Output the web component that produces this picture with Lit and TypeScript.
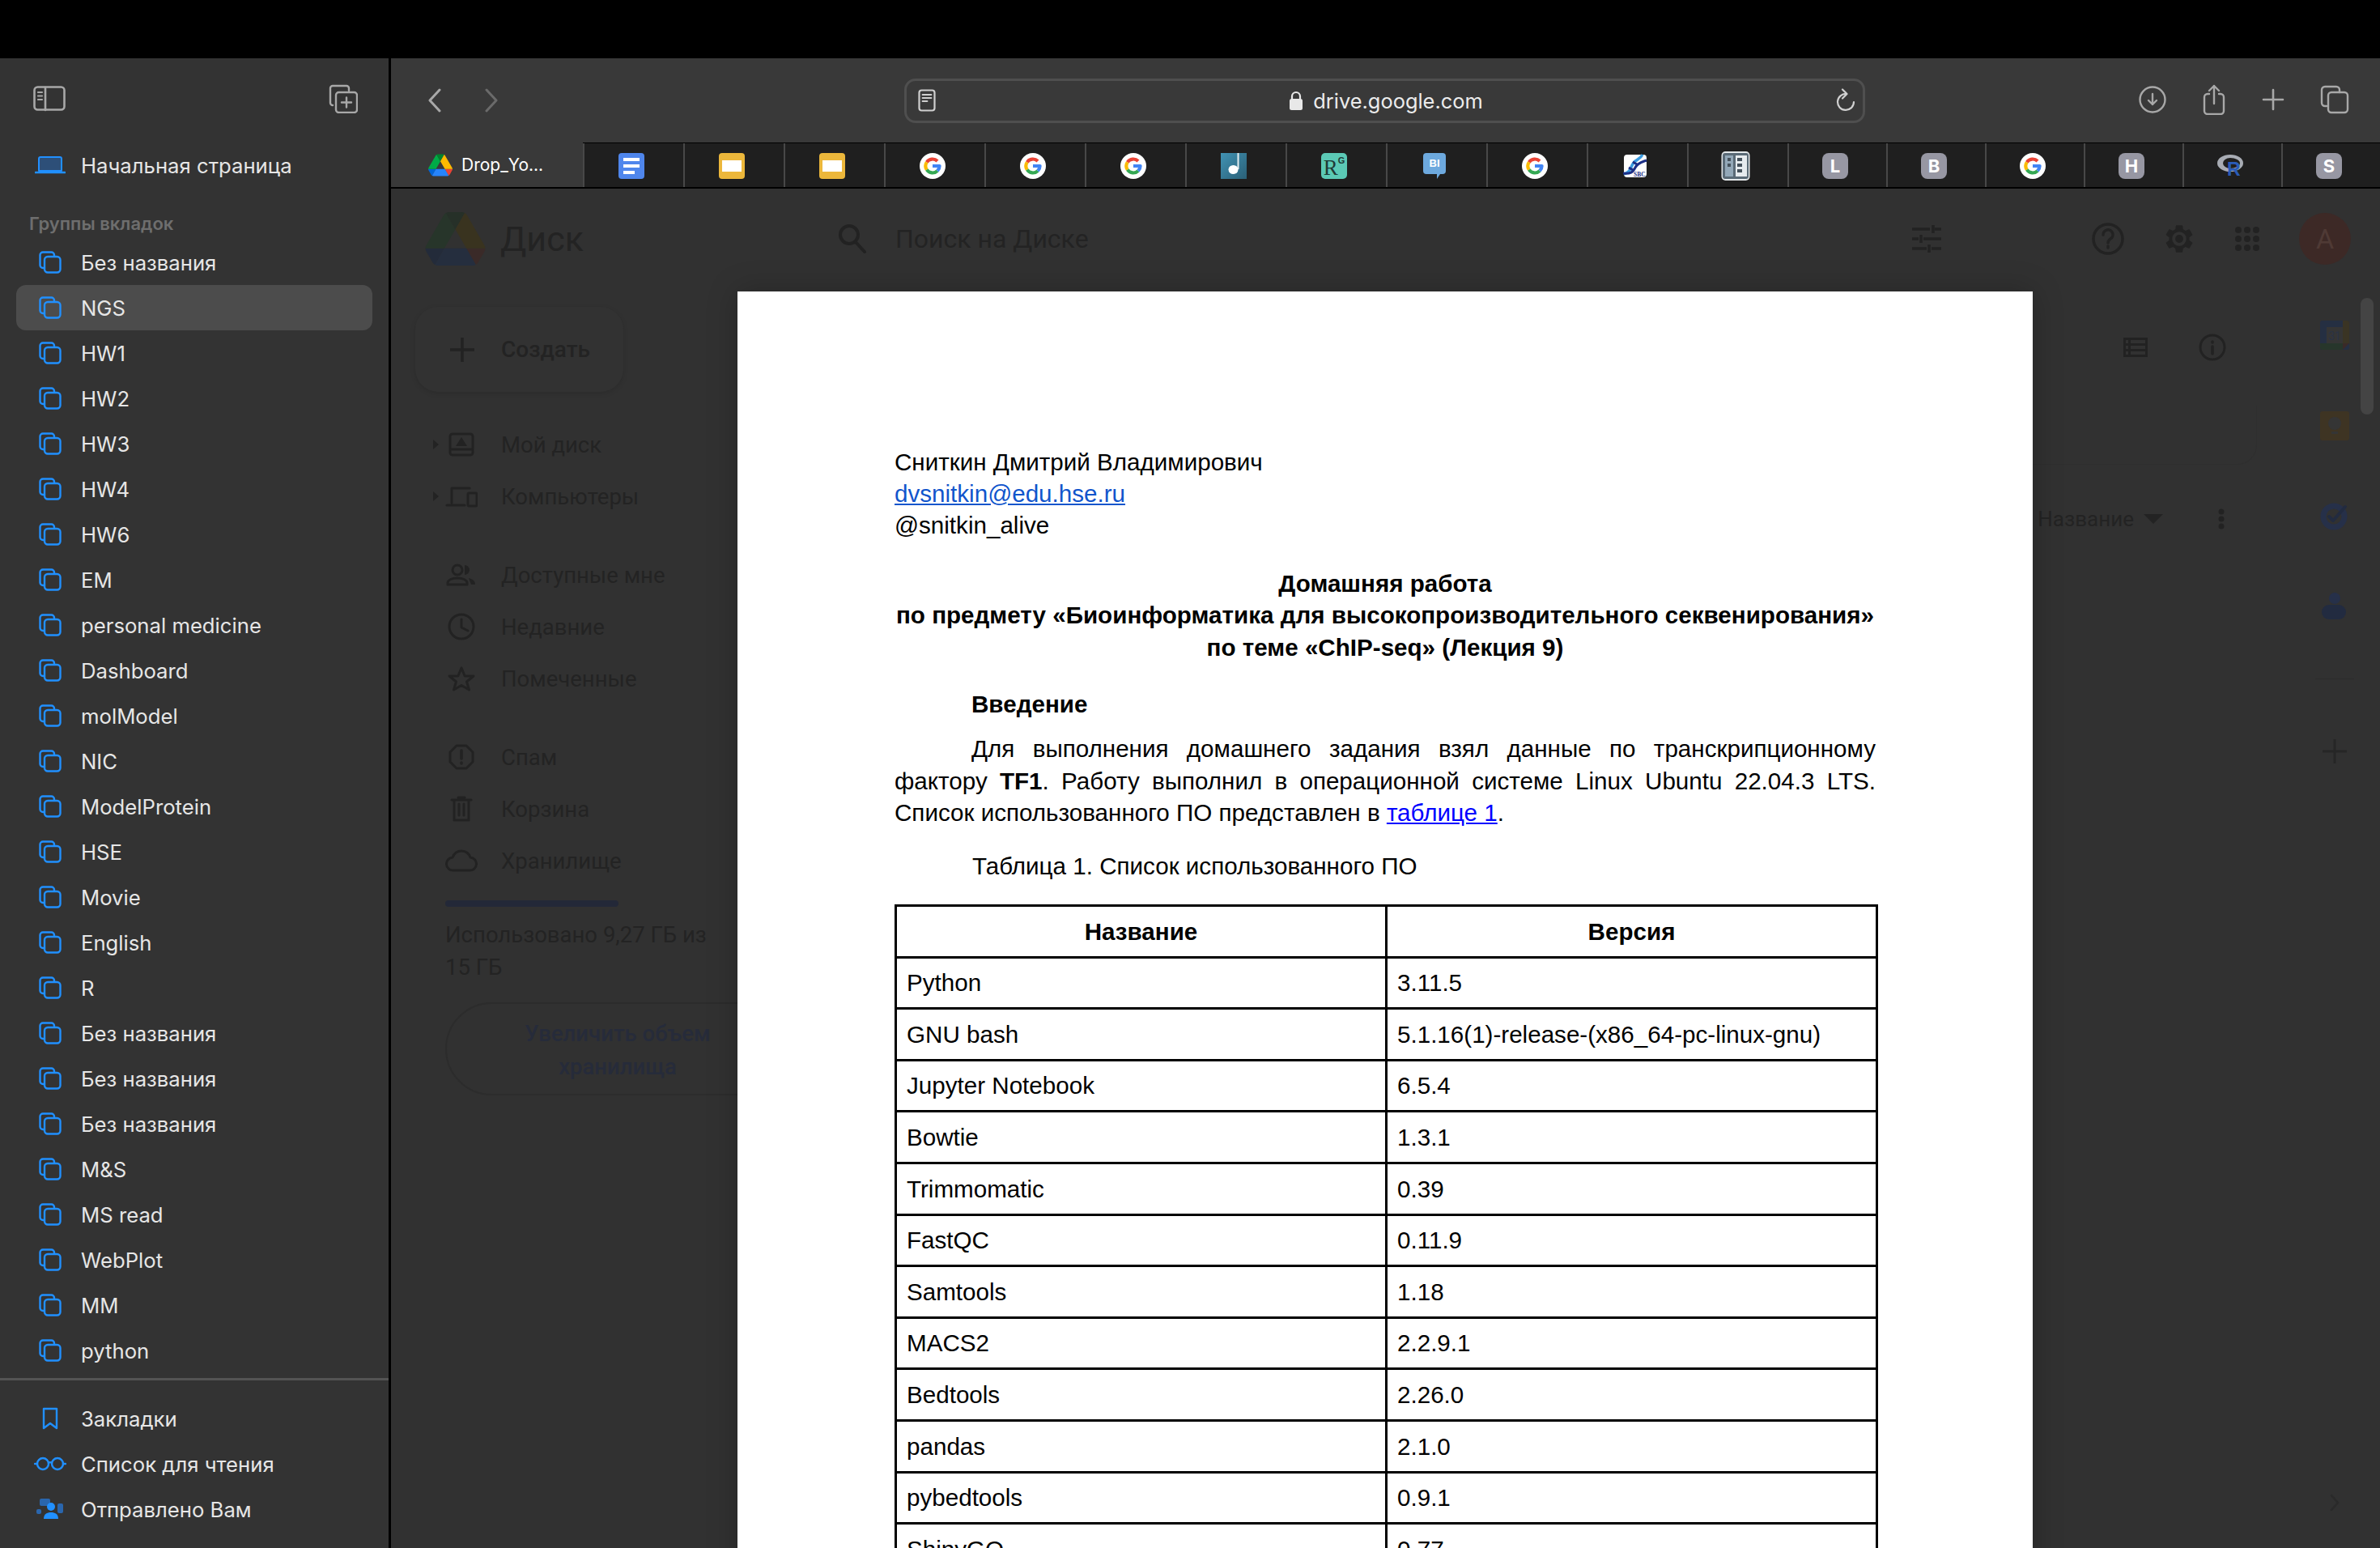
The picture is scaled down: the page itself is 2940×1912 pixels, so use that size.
import { LitElement, css, html, svg } from "lit";
import { customElement } from "lit/decorators.js";

const GROUPS = [
  "Без названия", "NGS", "HW1", "HW2", "HW3", "HW4", "HW6", "EM", "personal medicine",
  "Dashboard", "molModel", "NIC", "ModelProtein", "HSE", "Movie", "English", "R",
  "Без названия", "Без названия", "Без названия", "M&S", "MS read", "WebPlot", "MM", "python",
];

const ROWS = [
  ["Python", "3.11.5"], ["GNU bash", "5.1.16(1)-release-(x86_64-pc-linux-gnu)"],
  ["Jupyter Notebook", "6.5.4"], ["Bowtie", "1.3.1"], ["Trimmomatic", "0.39"],
  ["FastQC", "0.11.9"], ["Samtools", "1.18"], ["MACS2", "2.2.9.1"], ["Bedtools", "2.26.0"],
  ["pandas", "2.1.0"], ["pybedtools", "0.9.1"], ["ShinyGO", "0.77"],
];

const icon = (w: number, h: number, body: unknown, vb = `0 0 ${w} ${h}`) =>
  html`<svg width=${w} height=${h} viewBox=${vb} fill="none" stroke-linecap="round" stroke-linejoin="round">${body}</svg>`;

const groupIcon = () => icon(28, 28, svg`<g stroke="#2190ff" stroke-width="2.4">
  <path d="M7 21H5a3.5 3.5 0 0 1-3.5-3.5V5A3.5 3.5 0 0 1 5 1.500h10.500A3.500 3.500 0 0 1 19 5v1.500"/>
  <rect x="7" y="7" width="19.500" height="19.500" rx="4"/></g>`);

// same mark in two palettes: the live tab favicon and the dimmed page header
const driveMark = (p: string[]) => svg`
  <path d="m6.6 66.85 3.85 6.65c.8 1.4 1.95 2.5 3.3 3.3l13.75-23.8h-27.5c0 1.55.4 3.1 1.2 4.5z" fill=${p[0]}/>
  <path d="m43.65 25-13.75-23.8c-1.35.8-2.5 1.9-3.3 3.3l-25.4 44a9.06 9.06 0 0 0 -1.2 4.5h27.5z" fill=${p[1]}/>
  <path d="m73.55 76.8c1.35-.8 2.5-1.9 3.3-3.3l1.6-2.75 7.65-13.25c.8-1.4 1.2-2.95 1.2-4.5h-27.502l5.852 11.5z" fill=${p[2]}/>
  <path d="m43.65 25 13.75-23.8c-1.35-.8-2.9-1.2-4.5-1.2h-18.5c-1.6 0-3.15.45-4.5 1.2z" fill=${p[3]}/>
  <path d="m59.8 53h-32.3l-13.75 23.8c1.35.8 2.9 1.2 4.5 1.2h50.8c1.6 0 3.15-.45 4.5-1.2z" fill=${p[4]}/>
  <path d="m73.4 26.5-12.7-22c-.8-1.4-1.95-2.5-3.3-3.3l-13.75 23.8 16.15 28h27.45c0-1.55-.4-3.1-1.2-4.5z" fill=${p[5]}/>`;
const DRIVE_LIVE = ["#0066da", "#00ac47", "#ea4335", "#00832d", "#2684fc", "#ffba00"];
const DRIVE_DIM = ["#232b3a", "#27352a", "#3a2a28", "#263028", "#252e3e", "#39331f"];

const gIcon = () => icon(32, 32, svg`<circle cx="16" cy="16" r="16" fill="#fff"/>
  <g stroke-width="4.200" stroke-linecap="butt">
  <path d="M8.800 11.300A8.600 8.600 0 0 1 22 10" stroke="#ea4335"/>
  <path d="M8.800 11.300a8.600 8.600 0 0 0 0 9.400" stroke="#fbbc05"/>
  <path d="M8.800 20.700A8.600 8.600 0 0 0 22 22" stroke="#34a853"/>
  <path d="M22 22a8.600 8.600 0 0 0 2.600-6H16" stroke="#4285f4"/></g>`);

const badge = (letter: string) => html`<span class="badge">${letter}</span>`;

const FAVICONS = [
  icon(32, 32, svg`<rect width="32" height="32" rx="4" fill="#4f86ec"/><path d="M6 6h20v4H6zM6 14h20v4H6zM6 22h14v4H6z" fill="#fff"/>`),
  icon(32, 32, svg`<rect width="32" height="32" rx="4" fill="#ecb73b"/><rect x="4" y="9" width="24" height="14" fill="#fff"/>`),
  icon(32, 32, svg`<rect width="32" height="32" rx="4" fill="#ecb73b"/><rect x="4" y="9" width="24" height="14" fill="#fff"/>`),
  gIcon(), gIcon(), gIcon(),
  icon(32, 32, svg`<defs><linearGradient id="note" x1="0" y1="0" x2="1" y2="1"><stop offset="0" stop-color="#4193b4"/><stop offset="1" stop-color="#2a5f76"/></linearGradient></defs>
    <rect width="32" height="32" fill="url(#note)"/><path d="M21.500 0v20" stroke="#e4eef1" stroke-width="2" stroke-linecap="butt"/><ellipse cx="15.500" cy="20.500" rx="6" ry="5.500" fill="#fff"/>`),
  html`<span class="rg">R<sup>G</sup></span>`,
  html`<span class="bi">BI</span>`,
  gIcon(),
  icon(30, 30, svg`<rect x="1" y="1" width="28" height="28" rx="4" fill="#fff"/>
    <path d="M1 25c10-2 8-12 14-16 4-3 7-4 9-8" stroke="#3a9be0" stroke-width="3.500" stroke-linecap="butt"/>
    <path d="M0 24c9 1 12-1 15-7s9-7 14-9M7 17l7 4M12 10l7 4" stroke="#1c2f86" stroke-width="3" stroke-linecap="butt"/>
    <text x="13" y="28" font-size="7.500" font-weight="700" fill="#1c2f86" font-family="Liberation Serif, serif">SBC</text>`),
  icon(36, 36, svg`<rect x="0.500" y="0" width="35" height="36" rx="5" fill="#e4e8ea"/><rect x="2" y="2" width="32" height="32" rx="3" fill="#5a6a76"/><rect x="5" y="5" width="10" height="26" fill="#93a8b8"/><rect x="18" y="5" width="14" height="26" fill="#e6ebee"/><path d="M8 8h4v4H8zM8 15h4v4H8zM20 8h6v4h-6zM20 15h6v4h-6zM20 22h6v4h-6z" fill="#46525c"/>`),
  badge("L"), badge("B"), gIcon(), badge("H"),
  html`<span class="rlogo"><i></i><b>R</b></span>`,
  badge("S"),
];

const dim = "#222";
const GEAR =
  "M19.14 12.94c.04-.3.06-.61.06-.94 0-.32-.02-.64-.07-.94l2.03-1.58c.18-.14.23-.41.12-.61l-1.92-3.32c-.12-.22-.37-.29-.59-.22l-2.39.96c-.5-.38-1.03-.7-1.62-.94l-.36-2.54c-.04-.24-.24-.41-.48-.41h-3.84c-.24 0-.43.17-.47.41l-.36 2.54c-.59.24-1.13.57-1.62.94l-2.39-.96c-.22-.08-.47 0-.59.22L2.74 8.87c-.12.21-.08.47.12.61l2.03 1.58c-.05.3-.09.63-.09.94s.02.64.07.94l-2.03 1.58c-.18.14-.23.41-.12.61l1.92 3.32c.12.22.37.29.59.22l2.39-.96c.5.38 1.03.7 1.62.94l.36 2.54c.05.24.24.41.48.41h3.84c.24 0 .44-.17.47-.41l.36-2.54c.59-.24 1.13-.56 1.62-.94l2.39.96c.22.08.47 0 .59-.22l1.92-3.32c.12-.22.07-.47-.12-.61l-2.01-1.58z";

const NAV_TOP = [
  ["Мой диск", icon(32, 32, svg`<rect x="2" y="3" width="28" height="26" rx="3" stroke=${dim} stroke-width="3"/><path d="M3 22h26" stroke=${dim} stroke-width="3"/><path d="M16 7l7 11H9z" fill=${dim}/>`), true],
  ["Компьютеры", icon(40, 28, svg`<path d="M8 22V4h22M2 25h22" stroke=${dim} stroke-width="3"/><rect x="28" y="10" width="11" height="16" rx="1.500" stroke=${dim} stroke-width="3"/>`), true],
];
const NAV_MID = [
  ["Доступные мне", icon(38, 28, svg`<circle cx="14" cy="8" r="6" stroke=${dim} stroke-width="3"/><path d="M2 26v-2c0-4 6-6 12-6s12 2 12 6v2z" stroke=${dim} stroke-width="3"/><path d="M23 2a6 6 0 0 1 0 12M28 18c4 1 8 3 8 8h-5z" fill=${dim}/>`)],
  ["Недавние", icon(34, 34, svg`<circle cx="17" cy="17" r="15" stroke=${dim} stroke-width="3"/><path d="M17 8v10l8 4" stroke=${dim} stroke-width="3"/>`)],
  ["Помеченные", icon(34, 32, svg`<path d="M17 3l4.200 10H32l-8.500 7 3 10L17 24.500 7.500 30l3-10L2 13h10.800z" stroke=${dim} stroke-width="3"/>`)],
];
const NAV_LOW = [
  ["Спам", icon(32, 32, svg`<path d="M10 2h12l8 8v12l-8 8H10l-8-8V10z" stroke=${dim} stroke-width="3"/><path d="M16 8v10M16 23v1" stroke=${dim} stroke-width="3.500"/>`)],
  ["Корзина", icon(28, 32, svg`<path d="M2 5h24M10 2h8M5 5v25h18V5M11 10v14M17 10v14" stroke=${dim} stroke-width="3"/>`)],
  ["Хранилище", icon(40, 28, svg`<path d="M10 26a8 8 0 0 1-1-16C11 5 15 2 20 2c6 0 10 4 11 8a8 8 0 0 1-1 16z" stroke=${dim} stroke-width="3"/>`)],
];

@customElement("app-root")
export class AppRoot extends LitElement {
  static styles = css`
    :host {
      display: block;
      width: 2940px;
      height: 1912px;
      overflow: hidden;
      background: #000;
      font-family: Inter, "Noto Sans", sans-serif;
    }
    svg { display: block; flex: none; }
    .shell { display: flex; height: 1840px; margin-top: 72px; }

    /* sidebar */
    .side {
      width: 480px;
      flex: none;
      background: #333;
      border-right: 3px solid #000;
      display: flex;
      flex-direction: column;
      color: #e6e6e6;
      font-size: 25.700px;
    }
    .side-top {
      height: 104px;
      display: flex;
      justify-content: space-between;
      align-items: center;
      padding: 0 38px 4px 41px;
      box-sizing: border-box;
    }
    .row {
      height: 56px;
      margin: 0 20px;
      padding-left: 16px;
      display: flex;
      align-items: center;
      gap: 12px;
      border-radius: 12px;
      white-space: nowrap;
    }
    .row.on { background: #4c4c4c; }
    .slot { width: 52px; display: flex; justify-content: center; }
    .label {
      font-size: 22px;
      font-weight: 600;
      color: #6e6e6e;
      margin: 22px 0 0 36px;
      height: 42px;
      line-height: 44px;
    }
    .divider { height: 3px; background: #545454; margin: 6px 0 19px; }

    /* window */
    .win { flex: 1; min-width: 0; display: flex; flex-direction: column; }
    .bar {
      height: 104px;
      flex: none;
      background: #393939;
      display: flex;
      align-items: center;
      position: relative;
    }
    .nav-btns { display: flex; gap: 54px; margin-left: 46px; width: 588px; }
    .addr {
      width: 1187px;
      height: 55px;
      box-sizing: border-box;
      border: 3px solid #4f4f4f;
      border-radius: 14px;
      display: flex;
      align-items: center;
      padding: 0 9px 0 14px;
      color: #ececec;
      font-size: 25.400px;
    }
    .host { flex: 1; display: flex; justify-content: center; align-items: center; gap: 12px; }
    .tools { display: flex; align-items: center; gap: 44px; margin: -2px 0 0 338px; }

    .tabs {
      height: 57px;
      flex: none;
      display: flex;
      box-sizing: border-box;
      border-top: 1px solid #000;
      border-bottom: 2px solid #000;
      background: #1f1f1f;
    }
    .tab-on {
      width: 237px;
      margin-top: -1px;
      background: #393939;
      display: flex;
      align-items: center;
      gap: 11px;
      padding-left: 46px;
      box-sizing: border-box;
      color: #fff;
      font-size: 21px;
    }
    .tab {
      width: 124px;
      box-sizing: border-box;
      border-left: 2px solid #484848;
      padding: 2px 6px 0 0;
      display: flex;
      align-items: center;
      justify-content: center;
    }
    .tab.small { width: 122px; }
    .badge {
      width: 32px;
      height: 32px;
      border-radius: 8px;
      background: #9797a3;
      color: #fff;
      font: 700 22px/32px Inter, sans-serif;
      text-align: center;
    }
    .rg {
      width: 32px;
      height: 32px;
      border-radius: 5px;
      background: #5bc9b5;
      color: #1f3a36;
      font: 27px/36px "Liberation Serif", serif;
      text-align: center;
      white-space: nowrap;
    }
    .rg sup {
      font: 700 11px/0 "Liberation Sans", sans-serif;
      vertical-align: 14px;
    }
    .bi {
      width: 28px;
      height: 26px;
      border-radius: 4px;
      margin-top: -6px;
      background: #6da9de;
      color: #fff;
      font: 700 13px/26px "Liberation Sans", sans-serif;
      text-align: center;
      position: relative;
    }
    .bi::after {
      content: "";
      position: absolute;
      left: 17px;
      top: 26px;
      border-left: 4px solid #6da9de;
      border-bottom: 6px solid transparent;
    }
    .rlogo { width: 32px; height: 28px; position: relative; }
    .rlogo i {
      position: absolute;
      left: 0;
      top: 0;
      width: 32px;
      height: 21px;
      box-sizing: border-box;
      border: 4px solid #a8acb4;
      border-left-width: 7px;
      border-radius: 50%;
    }
    .rlogo b {
      position: absolute;
      left: 12px;
      top: 7px;
      color: #2a5cb8;
      font: 700 23px/23px "Liberation Sans", sans-serif;
    }

    /* dimmed drive page behind the preview */
    .page {
      flex: 1;
      min-height: 0;
      position: relative;
      overflow: hidden;
      background: #313131;
      color: #232323;
      font-family: Roboto, sans-serif;
    }
    .d-head { height: 124px; display: flex; align-items: center; }
    .d-logo { margin-left: 42px; }
    .d-title { font-size: 43px; margin-left: 18px; width: 417px; }
    .d-search { width: 1327px; display: flex; align-items: center; gap: 35px; font-size: 32px; }
    .d-right { display: flex; align-items: center; }
    .avatar {
      width: 64px;
      height: 64px;
      border-radius: 50%;
      background: #3d2926;
      color: #4f3a35;
      font-size: 34px;
      line-height: 64px;
      text-align: center;
    }
    .d-body { display: flex; height: 1555px; }
    .d-nav { width: 428px; flex: none; padding-top: 22px; font-size: 27.500px; box-sizing: border-box; }
    .create {
      width: 257px;
      height: 105px;
      margin-left: 30px;
      border-radius: 28px;
      background: #323232;
      box-shadow: 0 2px 6px rgba(0, 0, 0, 0.12);
      display: flex;
      align-items: center;
      gap: 32px;
      padding-left: 42px;
      box-sizing: border-box;
      font-size: 28px;
      font-weight: 500;
    }
    .group { margin-top: 33px; }
    .ditem { height: 64px; display: flex; align-items: center; position: relative; white-space: nowrap; }
    .dslot { width: 136px; display: flex; justify-content: flex-end; }
    .dslot > span { width: 98px; display: flex; justify-content: center; }
    .ditem b { font-weight: 400; }
    .caret {
      position: absolute;
      left: 52px;
      top: 26px;
      border-left: 7px solid #232323;
      border-top: 6px solid transparent;
      border-bottom: 6px solid transparent;
    }
    .usage { margin: 17px 0 0 67px; width: 345px; }
    .track { width: 214px; height: 8px; border-radius: 4px; background: #232838; }
    .used { line-height: 40px; margin-top: 15px; }
    .more {
      margin-top: 23px;
      width: 426px;
      height: 115px;
      box-sizing: border-box;
      border: 2px solid #2c2c2c;
      border-radius: 58px;
      color: #262b3a;
      font-weight: 500;
      line-height: 41px;
      text-align: center;
      padding-top: 16px;
    }
    .d-main { flex: 1; min-width: 0; font-size: 26px; }
    .d-tools { display: flex; justify-content: flex-end; align-items: center; gap: 63px; padding: 55px 78px 0 0; }
    .d-card {
      height: 72px;
      margin: 55px 40px 0 0;
      border: 1px solid #2f2f2f;
      border-top: 0;
      border-radius: 0 0 24px 0;
    }
    .d-sort { display: flex; justify-content: flex-end; align-items: center; margin-top: 52px; padding-right: 80px; gap: 12px; }
    .d-sort .tri { border: 12px solid transparent; border-top: 12px solid #232323; border-bottom: 0; margin-right: 56px; }
    .d-side {
      width: 112px;
      flex: none;
      display: flex;
      flex-direction: column;
      align-items: center;
      padding-top: 1px;
      box-sizing: border-box;
      position: relative;
    }
    .d-side > div { height: 112px; width: 112px; display: flex; align-items: center; justify-content: center; }
    .d-side hr { width: 48px; height: 1px; border: 0; background: #2c2c2c; margin: 32px 0 33px; }
    .scroll {
      position: absolute;
      left: 88px;
      top: 11px;
      width: 16px;
      height: 144px;
      border-radius: 8px;
      background: #444;
    }
    .d-side .collapse {
      position: absolute;
      left: 0;
      top: 1477px;
      height: 44px;
    }

    /* document preview */
    .doc {
      position: absolute;
      left: 428px;
      top: 127px;
      width: 1600px;
      height: 1700px;
      background: #fff;
      box-shadow: 0 0 36px rgba(0, 0, 0, 0.22);
      box-sizing: border-box;
      padding: 190.500px 194px 0;
      color: #000;
      font: 29.600px/39.4px "Liberation Sans", Arial, sans-serif;
    }
    .doc p { margin: 0; }
    .doc a { text-decoration: underline; }
    .mail { color: #1155cc; }
    .ref { color: #0000ff; }
    .center { text-align: center; font-weight: 700; margin-top: 32px !important; white-space: nowrap; }
    .h { font-weight: 700; margin: 31px 0 0 95px !important; }
    .para { text-align: justify; text-indent: 95px; margin-top: 16px !important; }
    .cap { margin: 26px 0 0 96px !important; }
    .tbl {
      margin-top: 28px;
      width: 1215px;
      display: grid;
      grid-template-columns: 606px 606px;
      grid-auto-rows: 63.600px;
      border: 3px solid #000;
      border-width: 3px 0 0 3px;
      box-sizing: border-box;
    }
    .tbl > div {
      border: 3px solid #000;
      border-width: 0 3px 3px 0;
      display: flex;
      align-items: center;
      padding-left: 12px;
      box-sizing: border-box;
      white-space: nowrap;
    }
    .tbl > .th { font-weight: 700; justify-content: center; padding: 0; }
  `;

  private ditem(item: unknown[]) {
    return html`<div class="ditem">
      ${item[2] ? html`<i class="caret"></i>` : ""}
      <div class="dslot"><span>${item[1]}</span></div>
      <b>${item[0]}</b>
    </div>`;
  }

  private sidebar() {
    const blue = "#2190ff";
    return html`<aside class="side">
      <div class="side-top">
        ${icon(40, 32, svg`<rect x="1.500" y="1.500" width="37" height="28" rx="4" stroke="#a8a8a8" stroke-width="2.600"/>
          <path d="M15 2v28" stroke="#a8a8a8" stroke-width="2.600"/><path d="M6 8h5M6 12.500h5M6 17h5" stroke="#a8a8a8" stroke-width="2.200"/>`)}
        ${icon(36, 36, svg`<g stroke="#a8a8a8" stroke-width="2.400"><path d="M5 26a3 3 0 0 1-3-3V5a3 3 0 0 1 3-3h17a3 3 0 0 1 3 3v3"/>
          <rect x="9" y="10" width="26" height="25" rx="3.500"/><path d="M22 16.500v12M16 22.500h12"/></g>`)}
      </div>
      <div class="row">
        <span class="slot">${icon(38, 24, svg`<path d="M5 19V4a2 2 0 0 1 2-2h24a2 2 0 0 1 2 2v15z" fill="#2d4f78" stroke=${blue} stroke-width="2"/>
          <path d="M1 21h36" stroke=${blue} stroke-width="2.600"/>`)}</span>
        Начальная страница
      </div>
      <div class="label">Группы вкладок</div>
      ${GROUPS.map((g, i) => html`<div class="row ${i === 1 ? "on" : ""}"><span class="slot">${groupIcon()}</span>${g}</div>`)}
      <div class="divider"></div>
      <div class="row"><span class="slot">${icon(20, 28, svg`<path d="M2 2h16v24l-8-6-8 6z" stroke=${blue} stroke-width="2.400"/>`)}</span>Закладки</div>
      <div class="row"><span class="slot">${icon(40, 18, svg`<g stroke=${blue} stroke-width="2.400"><circle cx="11" cy="9" r="7"/><circle cx="29" cy="9" r="7"/><path d="M18 8c1-1 3-1 4 0M1 9h3M36 9h3"/></g>`)}</span>Список для чтения</div>
      <div class="row"><span class="slot">${icon(34, 26, svg`<rect x="4" y="0" width="13" height="9" rx="2" fill="#2a66ad"/><rect x="26" y="6" width="7" height="12" rx="2" fill="#2a66ad"/><rect x="0" y="13" width="6" height="6" rx="2" fill="#2a66ad"/>
          <circle cx="18" cy="10" r="5" fill=${blue}/><path d="M9 25c0-6 4-8 9-8s9 2 9 8z" fill=${blue}/>`)}</span>Отправлено Вам</div>
    </aside>`;
  }

  private toolbar() {
    const c = "#a8a8a8";
    return html`<div class="bar">
        <div class="nav-btns">
          ${icon(16, 30, svg`<path d="M14 2L2 15l12 13" stroke=${c} stroke-width="3"/>`)}
          ${icon(16, 30, svg`<path d="M2 2l12 13L2 28" stroke="#6a6a6a" stroke-width="3"/>`)}
        </div>
        <div class="addr">
          ${icon(22, 28, svg`<rect x="1.500" y="1.500" width="19" height="25" rx="3" stroke="#cfcfcf" stroke-width="2.200"/><path d="M5.500 7h11M5.500 11h11M5.500 15h6" stroke="#cfcfcf" stroke-width="1.800"/>`)}
          <div class="host">
            ${icon(18, 25, svg`<path d="M4 11V7a5 5 0 0 1 10 0v4" stroke="#e8e8e8" stroke-width="2.200"/><rect x="1" y="10" width="16" height="14" rx="2.500" fill="#e8e8e8"/>`)}
            drive.google.com
          </div>
          ${icon(24, 30, svg`<path d="M13 7A10 10 0 1 0 22 17M8 1.500l5.500 5.500L8 12.500" stroke="#d0d0d0" stroke-width="2.200"/>`)}
        </div>
        <div class="tools">
          ${icon(34, 34, svg`<circle cx="17" cy="17" r="15.500" stroke=${c} stroke-width="2.400"/><path d="M17 10v13M12 18l5 5 5-5" stroke=${c} stroke-width="2.400"/>`)}
          ${icon(30, 38, svg`<path d="M9 12H7a4 4 0 0 0-4 4v17a4 4 0 0 0 4 4h16a4 4 0 0 0 4-4V16a4 4 0 0 0-4-4h-2M15 24V2M9 8l6-6 6 6" stroke=${c} stroke-width="2.400"/>`)}
          ${icon(28, 28, svg`<path d="M14 2v24M2 14h24" stroke=${c} stroke-width="2.600"/>`)}
          ${icon(36, 36, svg`<path d="M8 26H6a4 4 0 0 1-4-4V6a4 4 0 0 1 4-4h14a4 4 0 0 1 4 4v3" stroke=${c} stroke-width="2.400"/><rect x="10" y="9" width="24" height="25" rx="4" stroke=${c} stroke-width="2.400"/>`)}
        </div>
      </div>
      <div class="tabs">
        <div class="tab-on">
          ${icon(30, 28, driveMark(DRIVE_LIVE), "0 0 87.3 78")}Drop_Yo...
        </div>
        ${FAVICONS.map((f, i) => html`<div class="tab ${i >= 12 ? "small" : ""}">${f}</div>`)}
      </div>`;
  }

  private drive() {
    return html`
      <div class="d-head">
        <div class="d-logo">${icon(75, 66, driveMark(DRIVE_DIM), "0 0 87.3 78")}</div>
        <div class="d-title">Диск</div>
        <div class="d-search">
          ${icon(36, 38, svg`<circle cx="14" cy="14" r="11" stroke=${dim} stroke-width="4"/><path d="M22 23l11 12" stroke=${dim} stroke-width="4"/>`)}
          Поиск на Диске
        </div>
        <div class="d-right">
          ${icon(36, 34, svg`<path d="M0 5h22M28 5h8M26 0v10M0 17h8M14 17h22M11 12v10M0 29h18M24 29h12M21 24v10" stroke=${dim} stroke-width="3.500" stroke-linecap="butt"/>`)}
          <div style="width:186px"></div>
          ${icon(40, 40, svg`<circle cx="20" cy="20" r="18" stroke=${dim} stroke-width="3.500"/><path d="M14 15a6 6 0 1 1 9 5c-2 1.500-3 2-3 5M20 29v2" stroke=${dim} stroke-width="3.500"/>`)}
          <div style="width:47px"></div>
          ${icon(42, 42, svg`<path d=${GEAR} fill=${dim}/><circle cx="12" cy="12" r="5" fill="#313131"/><circle cx="12" cy="12" r="2.800" fill=${dim}/>`, "0 0 24 24")}
          <div style="width:47px"></div>
          ${icon(32, 32, svg`<g fill=${dim}><circle cx="5" cy="5" r="4"/><circle cx="16" cy="5" r="4"/><circle cx="27" cy="5" r="4"/><circle cx="5" cy="16" r="4"/><circle cx="16" cy="16" r="4"/><circle cx="27" cy="16" r="4"/><circle cx="5" cy="27" r="4"/><circle cx="16" cy="27" r="4"/><circle cx="27" cy="27" r="4"/></g>`)}
          <div style="width:48px"></div>
          <div class="avatar">A</div>
        </div>
      </div>
      <div class="d-body">
        <div class="d-nav">
          <div class="create">
            ${icon(32, 32, svg`<path d="M16 1v30M1 16h30" stroke=${dim} stroke-width="3.500" stroke-linecap="butt"/>`)}
            Создать
          </div>
          <div class="group">${NAV_TOP.map((n) => this.ditem(n))}</div>
          <div class="group">${NAV_MID.map((n) => this.ditem(n))}</div>
          <div class="group">${NAV_LOW.map((n) => this.ditem(n))}</div>
          <div class="usage">
            <div class="track"></div>
            <div class="used">Использовано 9,27 ГБ из 15 ГБ</div>
            <div class="more">Увеличить объем<br />хранилища</div>
          </div>
        </div>
        <div class="d-main">
          <div class="d-tools">
            ${icon(30, 24, svg`<path fill-rule="evenodd" d="M0 0h30v24H0zM3 3v4h3V3zM9 3v4h18V3zM3 10v4h3v-4zM9 10v4h18v-4zM3 17v4h3v-4zM9 17v4h18v-4z" fill=${dim}/>`)}
            ${icon(34, 34, svg`<circle cx="17" cy="17" r="15" stroke=${dim} stroke-width="3"/><path d="M17 16v9M17 10v1" stroke=${dim} stroke-width="3.500"/>`)}
          </div>
          <div class="d-card"></div>
          <div class="d-sort">
            Название <i class="tri"></i>
            ${icon(8, 26, svg`<g fill=${dim}><circle cx="4" cy="4" r="3.500"/><circle cx="4" cy="13" r="3.500"/><circle cx="4" cy="22" r="3.500"/></g>`)}
          </div>
        </div>
        <div class="d-side">
          <div>${icon(36, 36, svg`<rect width="36" height="36" rx="3" fill="#252f42"/><path d="M28 0h5a3 3 0 0 1 3 3v25h-8z" fill="#3a3424"/><path d="M0 28h28v8H3a3 3 0 0 1-3-3z" fill="#27362b"/><path d="M28 28h8l-8 8z" fill="#3a2a28"/><rect x="8" y="8" width="20" height="20" fill="#353535"/><text x="18" y="24" font-size="14" text-anchor="middle" fill="#2a3345" font-family="Roboto, sans-serif">31</text>`)}</div>
          <div>${icon(36, 36, svg`<rect width="36" height="36" rx="3" fill="#3e3423"/><circle cx="18" cy="15" r="8" fill="#353535"/><rect x="14" y="25" width="8" height="3" fill="#353535"/>`)}</div>
          <div>${icon(36, 36, svg`<circle cx="17" cy="18" r="13" stroke="#263049" stroke-width="7"/><path d="M11 18l5 5 15-17" stroke="#222b40" stroke-width="4"/>`)}</div>
          <div>${icon(36, 36, svg`<circle cx="18" cy="7" r="7" fill="#263049"/><rect x="2" y="15" width="30" height="18" rx="9" fill="#222b40"/>`)}</div>
          <hr />
          <div>${icon(34, 34, svg`<path d="M17 2v30M2 17h30" stroke="#262626" stroke-width="3" stroke-linecap="butt"/>`)}</div>
          <div class="collapse">${icon(12, 22, svg`<path d="M2 2l8 9-8 9" stroke="#2a2a2a" stroke-width="2.500"/>`)}</div>
          <i class="scroll"></i>
        </div>
      </div>
      <section class="doc">
        <p>Сниткин Дмитрий Владимирович</p>
        <p><a class="mail">dvsnitkin@edu.hse.ru</a></p>
        <p>@snitkin_alive</p>
        <p class="center">Домашняя работа<br />по предмету «Биоинформатика для высокопроизводительного секвенирования»<br />по теме «ChIP-seq» (Лекция 9)</p>
        <p class="h">Введение</p>
        <p class="para">Для выполнения домашнего задания взял данные по транскрипционному фактору <b>TF1</b>. Работу выполнил в операционной системе Linux Ubuntu 22.04.3 LTS. Список использованного ПО представлен в <a class="ref">таблице 1</a>.</p>
        <p class="cap">Таблица 1. Список использованного ПО</p>
        <div class="tbl">
          <div class="th">Название</div><div class="th">Версия</div>
          ${ROWS.map((r) => html`<div>${r[0]}</div><div>${r[1]}</div>`)}
        </div>
      </section>`;
  }

  render() {
    return html`<div class="shell">
      ${this.sidebar()}
      <div class="win">
        ${this.toolbar()}
        <main class="page">${this.drive()}</main>
      </div>
    </div>`;
  }
}
